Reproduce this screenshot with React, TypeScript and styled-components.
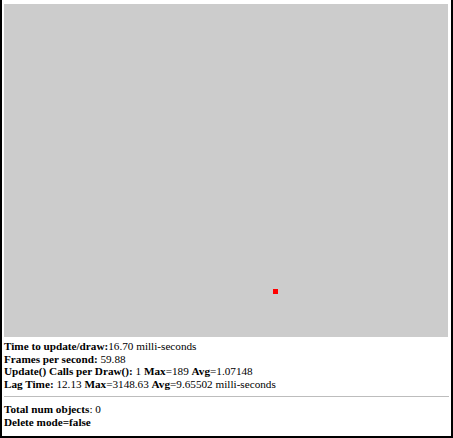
import React from "react";
import styled, { createGlobalStyle } from "styled-components";

const Global = createGlobalStyle`
  html, body { margin: 0; padding: 0; background: #fff; }
  body { font-family: "Liberation Serif", "Times New Roman", serif; }
`;

const Frame = styled.div`
  box-sizing: border-box;
  width: 453px;
  height: 438px;
  border-left: 2px solid #000;
  border-right: 2px solid #000;
  border-bottom: 2px solid #000;
  padding: 4px 2px 0 2px;
  display: flex;
  flex-direction: column;
`;

const Canvas = styled.div`
  position: relative;
  width: 444px;
  height: 333px;
  background: #cccccc;
`;

const Dot = styled.div`
  position: absolute;
  width: 5px;
  height: 5px;
  background: #ff0000;
`;

const Stats = styled.div<{ $top?: number }>`
  padding: ${(p) => p.$top ?? 3}px 0 0 0;
  font-size: 11.2px;
  line-height: 12.7px;
  color: #000;
`;

const Line = styled.div``;

const Rule = styled.hr`
  margin: 5px 0 6px 0;
  border: 0;
  border-top: 1px solid #bdbdbd;
  height: 0;
`;

export default function App() {
  return (
    <>
      <Global />
      <Frame>
        <Canvas>
          <Dot style={{ left: 269, top: 285 }} />
        </Canvas>
        <Stats>
          <Line><b>Time to update/draw:</b>16.70 milli-seconds</Line>
          <Line><b>Frames per second:</b> 59.88</Line>
          <Line><b>Update() Calls per Draw():</b> 1 <b>Max</b>=189 <b>Avg</b>=1.07148</Line>
          <Line><b>Lag Time:</b> 12.13 <b>Max</b>=3148.63 <b>Avg</b>=9.65502 milli-seconds</Line>
        </Stats>
        <Rule />
        <Stats $top={0}>
          <Line><b>Total num objects</b>: 0</Line>
          <Line><b>Delete mode=false</b></Line>
        </Stats>
      </Frame>
    </>
  );
}
